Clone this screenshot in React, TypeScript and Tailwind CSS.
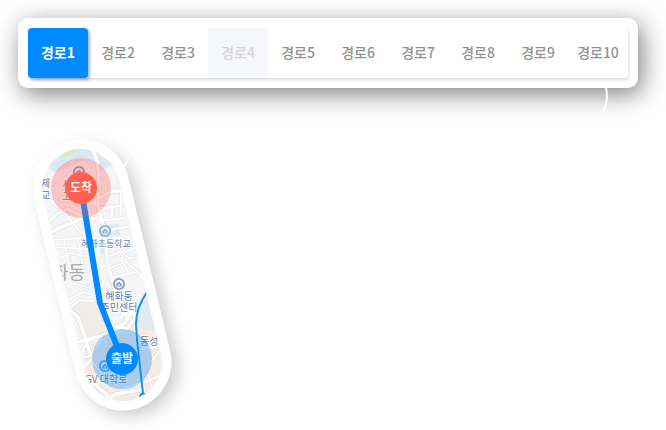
import { useState } from "react";

const FONT = "font-['Noto_Sans_CJK_KR','Noto_Sans',sans-serif]";

const routes = Array.from({ length: 10 }, (_, i) => ({
  name: `경로${i + 1}`,
  disabled: i === 3,
}));

const mainRoads = [
  "M70 145 L92 149 Q99 160 99 185 L98 206 L104 230 L108 265 L118 300 L128 318",
  "M92 150 L120 154",
  "M44 226 L58 213 L68 209 L87 219 L98 218",
  "M46 236 Q60 226 75 222 L90 214",
  "M101 209 L112 207 L112 216 M98 199 L112 191 L124 191",
  "M78 342 L98 337 L114 331 L124 324 L134 307",
  "M120 318 L128 309 L136 317 L127 329 L115 326",
  "M66 307 L78 317 L85 337 L91 357",
  "M82 376 L97 386 L112 399 M100 402 L116 394 L145 389",
];

const lanes = [
  "M50 200 L66 214 L80 232",
  "M60 186 L66 177 L73 186 L71 200 L61 200 Z",
  "M87 188 L95 190 L95 204 L88 203 Z",
  "M112 207 L122 206 M121 192 L121 216",
  "M99 221 L124 218 M105 231 L132 226",
  "M107 239 L116 241 L126 252 L139 246",
  "M108 257 L121 251 L130 259 L143 255",
  "M110 268 L126 262 L140 274 L149 270",
  "M113 277 L138 272 L148 288",
  "M119 242 L123 263 L130 275",
  "M50 240 L85 238 M52 247 L88 249",
  "M55 260 L71 253 L90 257",
  "M64 240 L69 265 L75 284 M78 239 L84 274",
  "M61 278 L90 270 M64 291 L72 283 L94 289",
  "M68 300 L83 292 L97 296",
  "M68 309 L80 300 L94 301",
  "M83 349 L91 338 M78 359 L90 356 L102 339",
  "M83 368 L91 360 L104 376 L97 386",
  "M135 330 L140 363 L144 393",
  "M140 349 L157 347 M151 362 L160 350 L167 360",
  "M144 382 L157 377 L168 370 M148 374 L153 393",
  "M124 388 L143 382",
];

function PlaceIcon({ x, y, color }: { x: number; y: number; color: string }) {
  return (
    <g transform={`translate(${x} ${y})`}>
      <circle r="6" fill={color} />
      <circle r="4.2" fill="#eef4fa" />
      <path d="M-2.6 2.4 V0 L0 -2.6 L2.6 0 V2.4 Z" fill={color} />
      <path d="M-1 1 H1" stroke="#fff" strokeWidth="1" />
    </g>
  );
}

function RouteMap() {
  return (
    <svg
      viewBox="0 88 666 342"
      className="block w-full"
      role="img"
      aria-label="출발지에서 도착지까지의 경로 지도"
    >
      <defs>
        <filter id="shade" filterUnits="userSpaceOnUse" x="0" y="88" width="260" height="400">
          <feGaussianBlur stdDeviation="9" />
        </filter>
        <clipPath id="capsule">
          <rect x="-39" y="-39" width="78" height="257" rx="39" transform="translate(81 188) rotate(-13.5)" />
        </clipPath>
      </defs>

      <path d="M606 88 Q609 102 602 114" fill="none" stroke="#fff" strokeWidth="2" />

      <path d="M88 195 L130 368" stroke="#000" strokeWidth="94" strokeLinecap="round" opacity="0.22" filter="url(#shade)" />
      <path d="M124 167 Q134 141 178 137" fill="none" stroke="#fff" strokeWidth="1.5" />
      <path d="M81 188 L123 362" stroke="#fff" strokeWidth="97" strokeLinecap="round" />

      <g clipPath="url(#capsule)">
        <rect x="30" y="140" width="150" height="280" fill="#f4f5f6" />
        <path d="M48 165 L57 153 L88 148 L98 154 L114 164 L101 171 L93 162 L82 161 L54 173 Z" fill="#dce8f1" />
        <path d="M62 155 L68 149 L78 148 L76 152 L65 157 Z" fill="#d4edbe" />
        <path d="M105 226 L119 224 L120 235 L106 237 Z" fill="#dce9f4" />
        <path d="M100 246 L107 245 L109 253 L101 254 Z" fill="#dce9f4" />
        <path d="M64 252 L69 250 L72 262 L67 264 Z M72 306 L82 298 L98 301 L110 324 L118 333 L82 338 Z" fill="#f0ece9" />
        <path d="M138 308 L149 292 L175 350 L156 341 L136 326 Z" fill="#dfeaf3" />
        <path d="M85 346 L132 329 L156 330 L172 370 L145 410 L100 410 L84 385 Z" fill="#f8e9e1" />
        <path d="M124 312 L135 308 L137 326 L125 330 Z" fill="#f5f5f6" />

        <g fill="none" strokeLinejoin="round">
          {lanes.map((d) => (
            <path key={`edge-${d}`} d={d} stroke="#e4e5e8" strokeWidth="3" />
          ))}
          {mainRoads.map((d) => (
            <path key={`edge-${d}`} d={d} stroke="#e0e1e4" strokeWidth="5" />
          ))}
          {lanes.map((d) => (
            <path key={d} d={d} stroke="#fff" strokeWidth="1.8" />
          ))}
          {mainRoads.map((d) => (
            <path key={d} d={d} stroke="#fff" strokeWidth="3.4" />
          ))}
        </g>

        <PlaceIcon x={79} y={172} color="#7b99c8" />
        <PlaceIcon x={105} y={231} color="#88afd9" />
        <PlaceIcon x={119} y={284} color="#8d9fc4" />
        <PlaceIcon x={105} y={366} color="#5ba5e2" />

        <g className={`${FONT} text-[10px]`} fill="#5c80ad" stroke="#fff" strokeWidth="2" paintOrder="stroke">
          <text x="41" y="187">제</text>
          <text x="41" y="199">교</text>
          <text x="62" y="188">서</text>
          <text x="62" y="200">고</text>
          <text x="106" y="247" textAnchor="middle" className="text-[9px]">혜화초등학교</text>
          <text x="119" y="300" textAnchor="middle">혜화동</text>
          <text x="119" y="311" textAnchor="middle">주민센터</text>
          <text x="140" y="345">동성로</text>
          <text x="79" y="383" fill="#73777e">CGV 대학로</text>
        </g>
        <text x="52" y="279" fill="#aaabad" className={`${FONT} text-[18px]`}>화동</text>

        <path d="M147 292 Q136 308 136 324 L137 340 L143 393 M140 398 Q140 393 144 394 L147 396" fill="none" stroke="#1b91e2" strokeWidth="2" />
      </g>

      <circle cx="122" cy="359" r="30" fill="#0085ff" opacity="0.3" />
      <path d="M81 188 L100 303 L122 359" fill="none" stroke="#008aff" strokeWidth="6" strokeLinejoin="round" />
      <circle cx="81" cy="188" r="30" fill="#ff5b50" opacity="0.3" />
      <circle cx="81" cy="188" r="16" fill="#ff604f" />
      <circle cx="122" cy="359" r="16" fill="#008aff" />
      <g className={`${FONT} text-[12px] font-bold`} fill="#fff" textAnchor="middle">
        <text x="81" y="192">도착</text>
        <text x="122" y="363">출발</text>
      </g>
    </svg>
  );
}

export default function App() {
  const [active, setActive] = useState(0);

  return (
    <main className={`${FONT} overflow-hidden bg-white`}>
      <nav
        aria-label="경로 선택"
        className="mt-[18px] mr-7 ml-[18px] rounded-[10px] bg-white p-[10px] shadow-[4px_6px_24px_rgba(0,0,0,0.5)]"
      >
        <div className="grid grid-cols-10 rounded shadow-[1px_2px_3px_rgba(90,95,130,0.2)]">
          {routes.map((route, i) => (
            <button
              key={route.name}
              type="button"
              disabled={route.disabled}
              aria-pressed={i === active}
              onClick={() => setActive(i)}
              className={
                i === active
                  ? "h-[50px] rounded bg-[#008aff] pb-0.5 text-[14px] font-bold text-white shadow-[2px_2px_3px_rgba(40,80,140,0.4)]"
                  : route.disabled
                    ? "h-[50px] bg-[#f6f7fa] pb-0.5 text-[14px] font-medium text-[#d5d5d5]"
                    : "h-[50px] pb-0.5 text-[14px] font-medium text-[#929292]"
              }
            >
              {route.name}
            </button>
          ))}
        </div>
      </nav>
      <RouteMap />
    </main>
  );
}
